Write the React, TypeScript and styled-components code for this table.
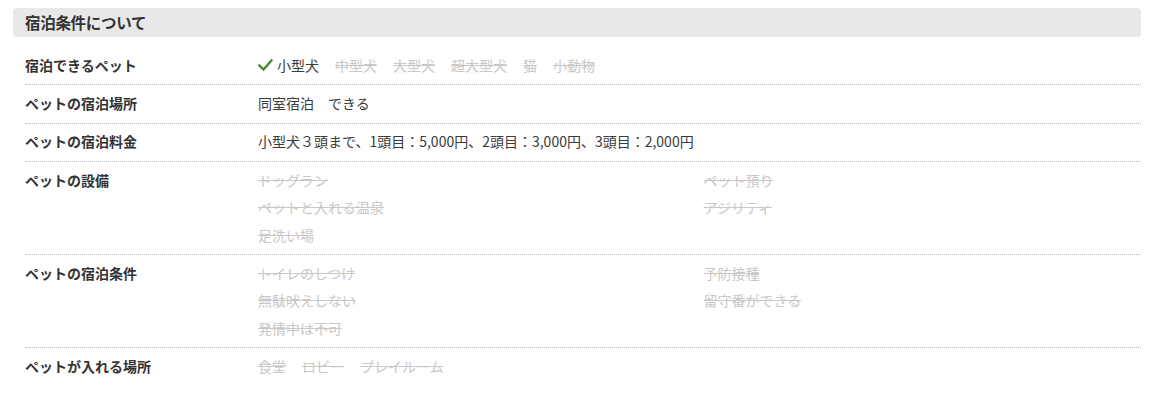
import React from "react";
import styled, { createGlobalStyle } from "styled-components";

const Global = createGlobalStyle`
  html, body { margin: 0; padding: 0; background: #fff; }
  body {
    font-family: "Noto Sans CJK JP", "Noto Sans", sans-serif;
    color: #333;
  }
  * { box-sizing: border-box; }
`;

const Page = styled.div`
  padding: 8px 11px 0 13px;
`;

const Heading = styled.h2`
  margin: 0;
  height: 29px;
  display: flex;
  align-items: center;
  padding: 0 12px 1px;
  background: #e8e8e8;
  border-radius: 4px;
  font-size: 15.5px;
  font-weight: 700;
  color: #333;
  letter-spacing: -0.3px;
`;

const Table = styled.dl`
  margin: 10px 0 0 12px;
  padding: 0;
`;

const Row = styled.div<{ $last?: boolean }>`
  display: grid;
  grid-template-columns: 233px 1fr;
  padding: 7.8px 0 9.5px;
  border-bottom: ${(p) => (p.$last ? "none" : "1px dotted #bbb")};
  font-size: 14px;
  line-height: 20px;
`;

const Label = styled.dt`
  margin: 0;
  font-weight: 700;
  color: #333;
`;

const Value = styled.dd`
  margin: 0;
  color: #3a3a3a;
`;

const Inline = styled.ul`
  margin: 0;
  padding: 0;
  list-style: none;
  display: flex;
  flex-wrap: wrap;
  column-gap: 16px;
`;

const Grid = styled.ul`
  margin: 0;
  padding: 0;
  list-style: none;
  display: grid;
  grid-template-columns: 1fr 1fr;
  column-gap: 8px;
  row-gap: 7.5px;
`;

const Item = styled.li<{ $on?: boolean }>`
  display: flex;
  align-items: center;
  color: ${(p) => (p.$on ? "#3a3a3a" : "#c8c8c8")};
  text-decoration: ${(p) => (p.$on ? "none" : "line-through")};
`;

const CheckMark = styled.svg`
  width: 15px;
  height: 14px;
  margin-right: 4px;
  flex: none;
`;

const Check = () => (
  <CheckMark viewBox="0 0 15 14">
    <path d="M1.5 7.5 L5.5 11.5 L13.5 2.5" fill="none" stroke="#4a8a2c" strokeWidth="2.4" strokeLinecap="square" />
  </CheckMark>
);

type Opt = { t: string; on?: boolean };

const pets: Opt[] = [
  { t: "小型犬", on: true },
  { t: "中型犬" },
  { t: "大型犬" },
  { t: "超大型犬" },
  { t: "猫" },
  { t: "小動物" },
];

const facilities: Opt[] = [
  { t: "ドッグラン" },
  { t: "ペット預り" },
  { t: "ペットと入れる温泉" },
  { t: "アジリティ" },
  { t: "足洗い場" },
];

const conditions: Opt[] = [
  { t: "トイレのしつけ" },
  { t: "予防接種" },
  { t: "無駄吠えしない" },
  { t: "留守番ができる" },
  { t: "発情中は不可" },
];

const places: Opt[] = [{ t: "食堂" }, { t: "ロビー" }, { t: "プレイルーム" }];

export default function App() {
  return (
    <Page>
      <Global />
      <Heading>宿泊条件について</Heading>
      <Table>
        <Row>
          <Label>宿泊できるペット</Label>
          <Value>
            <Inline>
              {pets.map((p) => (
                <Item key={p.t} $on={p.on}>
                  {p.on && <Check />}
                  {p.t}
                </Item>
              ))}
            </Inline>
          </Value>
        </Row>
        <Row>
          <Label>ペットの宿泊場所</Label>
          <Value>同室宿泊　できる</Value>
        </Row>
        <Row>
          <Label>ペットの宿泊料金</Label>
          <Value>小型犬３頭まで、1頭目：5,000円、2頭目：3,000円、3頭目：2,000円</Value>
        </Row>
        <Row>
          <Label>ペットの設備</Label>
          <Value>
            <Grid>
              {facilities.map((p) => (
                <Item key={p.t} $on={p.on}>{p.t}</Item>
              ))}
            </Grid>
          </Value>
        </Row>
        <Row>
          <Label>ペットの宿泊条件</Label>
          <Value>
            <Grid>
              {conditions.map((p) => (
                <Item key={p.t} $on={p.on}>{p.t}</Item>
              ))}
            </Grid>
          </Value>
        </Row>
        <Row $last>
          <Label>ペットが入れる場所</Label>
          <Value>
            <Inline>
              {places.map((p) => (
                <Item key={p.t} $on={p.on}>{p.t}</Item>
              ))}
            </Inline>
          </Value>
        </Row>
      </Table>
    </Page>
  );
}
